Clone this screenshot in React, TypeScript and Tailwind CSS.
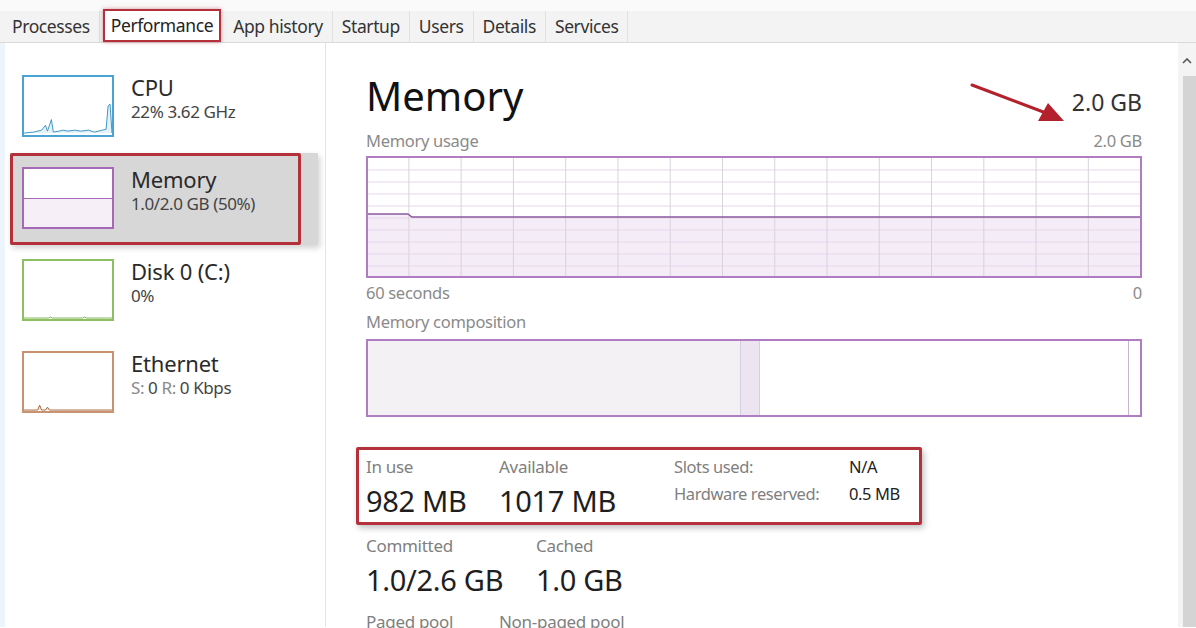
import { ReactNode } from "react";

const tabs = ["Processes", "Performance", "App history", "Startup", "Users", "Details", "Services"];

type Res = {
  name: string;
  sub: ReactNode;
  border: string;
  thumb: ReactNode;
  selected?: boolean;
};

const CpuThumb = () => (
  <svg viewBox="0 0 90 60" className="h-full w-full" preserveAspectRatio="none">
    <polyline
      fill="#e6f2f9"
      stroke="#3d94c4"
      strokeWidth="1"
      points="0,58 10,57 18,55 22,50 24,56 28,44 30,57 36,56 40,55 45,56 52,55 58,56 66,55 72,57 80,55 84,54 86,30 88,28 90,58"
    />
  </svg>
);

const MemThumb = () => (
  <div className="flex h-full flex-col">
    <div className="flex-1 bg-white" />
    <div className="h-1/2 border-t border-[#a868b8] bg-[#f6eff8]" />
  </div>
);

const DiskThumb = () => (
  <svg viewBox="0 0 90 60" className="h-full w-full" preserveAspectRatio="none">
    <polyline fill="none" stroke="#7db24b" strokeWidth="1" points="0,59 25,59 27,58 29,59 60,59 62,58 64,59 90,59" />
  </svg>
);

const EthThumb = () => (
  <svg viewBox="0 0 90 60" className="h-full w-full" preserveAspectRatio="none">
    <polyline fill="#f5e4d6" stroke="#a8653a" strokeWidth="1" points="0,59 14,59 16,54 18,59 22,59 24,56 26,59 90,59" />
  </svg>
);

const resources: Res[] = [
  { name: "CPU", sub: "22% 3.62 GHz", border: "border-[#4aa3d2]", thumb: <CpuThumb /> },
  { name: "Memory", sub: "1.0/2.0 GB (50%)", border: "border-[#a868b8]", thumb: <MemThumb />, selected: true },
  { name: "Disk 0 (C:)", sub: "0%", border: "border-[#8cc063]", thumb: <DiskThumb /> },
  {
    name: "Ethernet",
    sub: (
      <>
        <span className="text-[#888]">S:</span> 0 <span className="text-[#888]">R:</span> 0 Kbps
      </>
    ),
    border: "border-[#c89270]",
    thumb: <EthThumb />,
  },
];

const UsageGraph = () => {
  const cols = Array.from({ length: 15 }, (_, i) => 41 + i * 52.4);
  const rows = Array.from({ length: 9 }, (_, i) => (i + 1) * 12);
  return (
    <svg viewBox="0 0 774 118" className="h-full w-full" preserveAspectRatio="none">
      <polygon points="0,56 40,56 44,59 774,59 774,118 0,118" fill="#f4ecf7" />
      {rows.map((y) => (
        <line key={y} x1="0" x2="774" y1={y} y2={y} stroke="#e6d6ec" strokeWidth="1" />
      ))}
      {cols.map((x) => (
        <line key={x} x1={x} x2={x} y1="0" y2="118" stroke="#d9d2de" strokeWidth="1" />
      ))}
      <polyline points="0,56 40,56 44,59 774,59" fill="none" stroke="#8a5a9e" strokeWidth="1.5" />
    </svg>
  );
};

const Stat = ({ label, value, w }: { label: string; value: string; w: string }) => (
  <div className={w}>
    <div className="text-[17px] leading-[22px] tracking-[-0.3px] text-[#808080]">{label}</div>
    <div className="mt-[6px] text-[29px] leading-[34px] tracking-[-0.3px] text-[#1e1e1e]">{value}</div>
  </div>
);

export default function App() {
  return (
    <div
      className="relative h-[628px] w-[1196px] overflow-hidden bg-white text-[#222]"
      style={{ fontFamily: '"Noto Sans", "Open Sans", sans-serif' }}
    >
      {/* tab strip */}
      <div className="h-[11px] bg-[#fafafa]" />
      <div className="flex h-[32px] items-stretch border-b border-[#dadada] bg-[#f3f3f3] pl-[3px]">
        {tabs.map((t) => {
          const active = t === "Performance";
          return (
            <div
              key={t}
              className={
                active
                  ? "relative -mt-[2px] ml-[3px] mr-[3px] flex items-center border-2 border-[#b4303b] bg-white px-[6px] text-[17.5px] tracking-[-0.4px] text-[#222] shadow-[0_0_4px_rgba(180,48,59,0.5)]"
                  : "flex items-center border-r border-[#e0e0e0] px-[9px] text-[17.5px] tracking-[-0.4px] text-[#333]"
              }
            >
              {t}
            </div>
          );
        })}
      </div>

      <div className="flex h-[584px]">
        {/* resource list */}
        <div className="w-[326px] border-r border-[#e4e4e4] border-l-[5px] border-l-[#eef4fb] pt-[18px]">
          {resources.map((r) => (
            <div key={r.name} className="relative">
              <div
                className={
                  "ml-[5px] flex h-[92px] w-[308px] items-start gap-[17px] pl-[12px] pt-[14px] " +
                  (r.selected ? "bg-[#d7d7d7] shadow-[2px_3px_6px_rgba(0,0,0,0.18)]" : "")
                }
              >
                <div className={"h-[62px] w-[92px] shrink-0 border-2 bg-white " + r.border}>{r.thumb}</div>
                <div className="-mt-[2px]">
                  <div className="text-[22px] leading-[28px] tracking-[-0.2px] text-[#2a2a2a]">{r.name}</div>
                  <div className="text-[17px] leading-[22px] tracking-[-0.4px] text-[#444]">{r.sub}</div>
                </div>
              </div>
              {r.selected && (
                <span className="pointer-events-none absolute left-[5px] top-0 h-[92px] w-[291px] rounded-[2px] border-[3px] border-[#b4303b]" />
              )}
            </div>
          ))}
        </div>

        {/* memory detail */}
        <div className="flex-1 pl-[40px] pt-[29px]">
          <div className="w-[776px]">
            <div className="flex items-baseline justify-between">
              <div className="text-[40px] leading-[48px] text-[#111]">Memory</div>
              <div className="text-[23px] leading-[28px] text-[#333]">2.0 GB</div>
            </div>
            <div className="mt-[11px] flex justify-between text-[16.5px] leading-[20px] tracking-[-0.3px] text-[#8a8a8a]">
              <span>Memory usage</span>
              <span>2.0 GB</span>
            </div>
            <div className="mt-[5px] h-[122px] border-2 border-[#b07cc2]">
              <UsageGraph />
            </div>
            <div className="mt-[5px] flex justify-between text-[16.5px] leading-[20px] tracking-[-0.3px] text-[#8a8a8a]">
              <span>60 seconds</span>
              <span>0</span>
            </div>
            <div className="mt-[9px] text-[16.5px] leading-[20px] tracking-[-0.3px] text-[#8a8a8a]">Memory composition</div>
            <div className="mt-[7px] flex h-[78px] border-2 border-[#b07cc2]">
              <div className="w-[372px] bg-[#f3f1f3]" />
              <div className="w-[20px] border-x border-[#d7cce0] bg-[#ece4f1]" />
              <div className="flex-1 bg-white" />
              <div className="w-[12px] border-l border-[#c7b3d2] bg-white" />
            </div>

            {/* in use / available */}
            <div className="relative -ml-[10px] mt-[30px] flex h-[78px] w-[566px] items-start pl-[10px] pt-[9px]">
              <span className="pointer-events-none absolute inset-0 rounded-[2px] border-[3px] border-[#b4303b] shadow-[2px_3px_6px_rgba(0,0,0,0.25)]" />
              <Stat label="In use" value="982 MB" w="w-[133px]" />
              <Stat label="Available" value="1017 MB" w="w-[175px]" />
              <div className="grid grid-cols-[175px_auto] content-start gap-y-[5px] text-[16.5px] leading-[22px] tracking-[-0.4px]">
                <span className="text-[#808080]">Slots used:</span>
                <span className="text-[#222]">N/A</span>
                <span className="text-[#808080]">Hardware reserved:</span>
                <span className="text-[#222]">0.5 MB</span>
              </div>
            </div>

            <div className="mt-[10px] flex">
              <Stat label="Committed" value="1.0/2.6 GB" w="w-[170px]" />
              <Stat label="Cached" value="1.0 GB" w="w-[170px]" />
            </div>
            <div className="mt-[14px] flex text-[17px] leading-[22px] tracking-[-0.3px] text-[#808080]">
              <span className="w-[133px]">Paged pool</span>
              <span>Non-paged pool</span>
            </div>
          </div>
        </div>

        {/* scrollbar */}
        <div className="flex w-[18px] flex-col bg-[#f4f4f4]">
          <div className="flex h-[33px] items-start justify-center pt-[15px]">
            <svg width="10" height="6" viewBox="0 0 10 6">
              <polyline points="1,5 5,1 9,5" fill="none" stroke="#555" strokeWidth="1.6" />
            </svg>
          </div>
          <div className="ml-[5px] flex-1 bg-[#d4d4d4]" />
        </div>
      </div>

      {/* callout arrow */}
      <svg className="pointer-events-none absolute left-[960px] top-[76px]" width="110" height="54" viewBox="0 0 110 54">
        <line x1="12" y1="9" x2="86" y2="37" stroke="#b3222c" strokeWidth="3" strokeLinecap="round" />
        <polygon points="104,45 78,45 88,27" fill="#b3222c" />
      </svg>
    </div>
  );
}
